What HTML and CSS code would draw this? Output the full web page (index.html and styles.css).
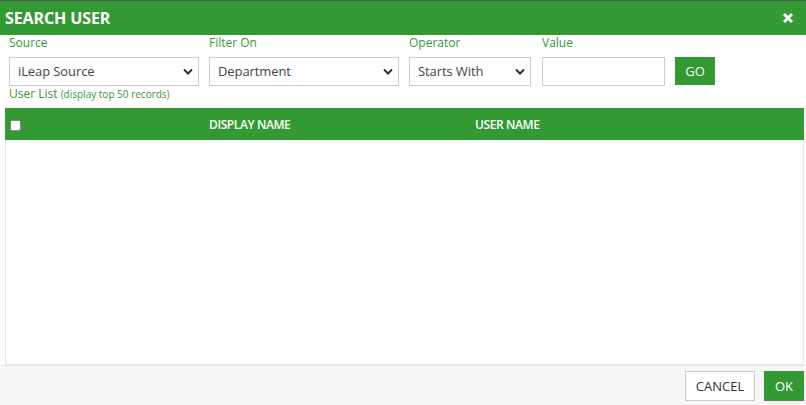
FILE: index.html
```html
<!DOCTYPE html>
<html>
<head>
<meta charset="utf-8">
<link rel="stylesheet" href="styles.css">
</head>
<body>
<div class="modal">
  <div class="header">
    <span class="title">SEARCH USER</span>
    <svg class="close" width="12" height="12" viewBox="0 0 12 12"><path d="M2 2 L10 10 M10 2 L2 10" stroke="#fff" stroke-width="3" stroke-linecap="butt"/></svg>
  </div>
  <div class="filters">
    <div class="field f-source">
      <label>Source</label>
      <div class="select"><span>iLeap Source</span><svg width="10" height="7" viewBox="0 0 10 7"><path d="M1 1.5 L5 5.5 L9 1.5" fill="none" stroke="#333" stroke-width="2"/></svg></div>
    </div>
    <div class="field f-filter">
      <label>Filter On</label>
      <div class="select"><span>Department</span><svg width="10" height="7" viewBox="0 0 10 7"><path d="M1 1.5 L5 5.5 L9 1.5" fill="none" stroke="#333" stroke-width="2"/></svg></div>
    </div>
    <div class="field f-op">
      <label>Operator</label>
      <div class="select"><span>Starts With</span><svg width="10" height="7" viewBox="0 0 10 7"><path d="M1 1.5 L5 5.5 L9 1.5" fill="none" stroke="#333" stroke-width="2"/></svg></div>
    </div>
    <div class="field f-value">
      <label>Value</label>
      <div class="input"></div>
    </div>
    <div class="field f-go">
      <button class="go">GO</button>
    </div>
  </div>
  <div class="userlist">User List <small>(display top 50 records)</small></div>
  <div class="table">
    <div class="thead">
      <div class="c-check"><span class="checkbox"></span></div>
      <div class="c-display">DISPLAY NAME</div>
      <div class="c-user">USER NAME</div>
    </div>
    <div class="tbody"></div>
  </div>
  <div class="footer">
    <button class="cancel">CANCEL</button>
    <button class="ok">OK</button>
  </div>
</div>
</body>
</html>
```

FILE: styles.css
```css
* { box-sizing: border-box; }
html, body { margin: 0; padding: 0; background: #fff; }
body { font-family: "Open Sans", "Noto Sans", sans-serif; width: 806px; height: 405px; overflow: hidden; }
.modal { border-top: 1px solid #555; height: 405px; display: flex; flex-direction: column; }
.header { background: #339933; height: 34px; display: flex; align-items: center; justify-content: space-between; padding: 0 12px 0 5px; }
.title { color: #fff; font-weight: 700; font-size: 16px; letter-spacing: -0.1px; }
.close { display: block; }
.filters { display: flex; padding: 0 0 0 9px; height: 51px; }
.field { display: flex; flex-direction: column; }
.field label { color: #339933; font-size: 12px; line-height: 16px; height: 22px; }
.f-source, .f-filter { width: 190px; margin-right: 10px; }
.f-op { width: 122px; margin-right: 11px; }
.f-value { width: 123px; margin-right: 10px; }
.select { height: 30px; border: 1px solid #ccc; display: flex; align-items: center; justify-content: space-between; padding: 0 5px 0 8px; font-size: 13px; color: #444; letter-spacing: -0.1px; }
.select svg { display: block; }
.input { height: 30px; border: 1px solid #ccc; }
.f-go { padding-top: 22px; }
.go { width: 40px; height: 28px; background: #339933; color: #fff; border: 0; font-family: inherit; font-size: 13px; padding: 0; }
.userlist { color: #339933; font-size: 12px; line-height: 16px; padding-left: 9px; height: 22px; }
.userlist small { font-size: 10px; }
.table { margin: 0 2px 0 5px; flex: 1; display: flex; flex-direction: column; }
.thead { background: #339933; height: 32px; display: flex; align-items: center; color: #fff; font-size: 12px; font-weight: 600; letter-spacing: -0.4px; }
.c-check { width: 204px; padding-left: 5px; }
.checkbox { display: block; width: 11px; height: 11px; background: #fff; border: 1px solid #888; border-radius: 2px; margin-top: 2px; }
.c-display { width: 266px; }
.tbody { flex: 1; border: 1px solid #e6e6e6; border-top: 0; }
.footer { height: 40px; background: #f7f7f7; border-top: 1px solid #e6e6e6; display: flex; justify-content: flex-end; align-items: center; padding: 0 2px 0 0; gap: 9px; }
.footer button { font-family: inherit; font-size: 13px; height: 30px; padding: 0; }
.cancel { width: 70px; background: #fff; border: 1px solid #ccc; color: #333; }
.ok { width: 40px; background: #339933; color: #fff; border: 0; }
```
